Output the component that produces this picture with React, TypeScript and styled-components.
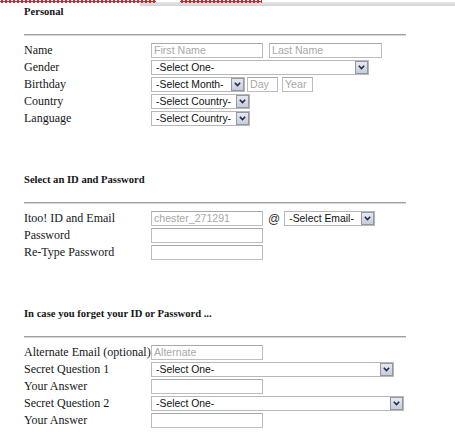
import React from "react";
import styled, { createGlobalStyle } from "styled-components";

const Global = createGlobalStyle`
  html, body { margin: 0; padding: 0; background: #fff; }
  body { font-family: "Liberation Serif", "Times New Roman", serif; color: #111; }
`;

const TopStrip = styled.div`
  position: relative;
  height: 6px;
  overflow: hidden;
`;
const GrayBand = styled.div`
  margin-left: 140px;
  margin-top: 2px;
  height: 4px;
  background: linear-gradient(#e4e4e4, #d4d4d4);
`;
const Squiggle = styled.div<{ $left: number; $width: number }>`
  position: absolute;
  top: 0;
  left: ${(p) => p.$left}px;
  width: ${(p) => p.$width}px;
  height: 3px;
  background: radial-gradient(circle at 50% 50%, #e41e26 0 1.5px, transparent 1.8px) 0 0 / 4px 3px repeat-x;
`;

const Page = styled.div`
  padding-left: 24px;
`;

const Heading = styled.div<{ $top: number }>`
  margin-top: ${(p) => p.$top}px;
  font-family: "Liberation Serif", "Times New Roman", serif;
  font-weight: bold;
  font-size: 10.6px;
  line-height: 12px;
  height: 12px;
  color: #151515;
`;

const Rule = styled.div<{ $top: number }>`
  margin-top: ${(p) => p.$top}px;
  width: 382px;
  height: 2px;
  background: linear-gradient(#a0a0a0 50%, #d8d8d8 50%);
`;

const Form = styled.div<{ $top: number }>`
  margin-top: ${(p) => p.$top}px;
  display: grid;
  grid-template-columns: 127px auto;
  grid-auto-rows: 17px;
  align-items: center;
`;

const Label = styled.div`
  font-size: 12px;
  line-height: 15px;
  white-space: nowrap;
  color: #161616;
`;

const Controls = styled.div`
  display: flex;
  align-items: center;
`;

const Field = styled.div<{ $w: number; $ml?: number }>`
  box-sizing: border-box;
  width: ${(p) => p.$w}px;
  height: 15px;
  margin-left: ${(p) => p.$ml ?? 0}px;
  border: 1px solid #bdbdbd;
  border-top-color: #a9a9a9;
  background: #fff;
  font-family: "Liberation Sans", Arial, sans-serif;
  font-size: 10.6px;
  line-height: 13px;
  padding-left: 2px;
  color: #a8a8a8;
  white-space: nowrap;
  overflow: hidden;
`;

const SelectBox = styled.div<{ $w: number; $ml?: number }>`
  box-sizing: border-box;
  width: ${(p) => p.$w}px;
  height: 15px;
  margin-left: ${(p) => p.$ml ?? 0}px;
  border: 1px solid #b8b8b8;
  background: #fff;
  display: flex;
  align-items: center;
  justify-content: space-between;
  font-family: "Liberation Sans", Arial, sans-serif;
  font-size: 10.4px;
  color: #111;
  padding-left: 4px;
  white-space: nowrap;
`;

const ArrowBtn = styled.div`
  box-sizing: border-box;
  width: 13px;
  height: 13px;
  border: 1px solid #8f98a8;
  background: linear-gradient(#e6e9ef, #c7ccd6);
  display: flex;
  align-items: center;
  justify-content: center;
  flex: none;
`;

const At = styled.span`
  font-family: "Liberation Sans", Arial, sans-serif;
  font-size: 12px;
  color: #333;
  margin: 0 4px 0 5px;
`;

const Select = ({ w, ml, text }: { w: number; ml?: number; text: string }) => (
  <SelectBox $w={w} $ml={ml}>
    <span>{text}</span>
    <ArrowBtn>
      <svg width="7" height="5" viewBox="0 0 7 5">
        <path d="M0.8 0.8 L3.5 3.5 L6.2 0.8" fill="none" stroke="#1d2a52" strokeWidth="1.6" />
      </svg>
    </ArrowBtn>
  </SelectBox>
);

export default function App() {
  return (
    <>
      <Global />
      <TopStrip>
        <GrayBand />
        <Squiggle $left={0} $width={156} />
        <Squiggle $left={180} $width={82} />
      </TopStrip>
      <Page>
        <Heading $top={0}>Personal</Heading>
        <Rule $top={16} />
        <Form $top={6}>
          <Label>Name</Label>
          <Controls>
            <Field $w={112}>First Name</Field>
            <Field $w={113} $ml={6}>Last Name</Field>
          </Controls>
          <Label>Gender</Label>
          <Controls>
            <Select w={218} text="-Select One-" />
          </Controls>
          <Label>Birthday</Label>
          <Controls>
            <Select w={94} text="-Select Month-" />
            <Field $w={31} $ml={2}>Day</Field>
            <Field $w={31} $ml={4}>Year</Field>
          </Controls>
          <Label>Country</Label>
          <Controls>
            <Select w={99} text="-Select Country-" />
          </Controls>
          <Label>Language</Label>
          <Controls>
            <Select w={99} text="-Select Country-" />
          </Controls>
        </Form>

        <Heading $top={47}>Select an ID and Password</Heading>
        <Rule $top={16} />
        <Form $top={6}>
          <Label>Itoo! ID and Email</Label>
          <Controls>
            <Field $w={112}>chester_271291</Field>
            <At>@</At>
            <Select w={91} text="-Select Email-" />
          </Controls>
          <Label>Password</Label>
          <Controls>
            <Field $w={112} />
          </Controls>
          <Label>Re-Type Password</Label>
          <Controls>
            <Field $w={112} />
          </Controls>
        </Form>

        <Heading $top={47}>In case you forget your ID or Password ...</Heading>
        <Rule $top={16} />
        <Form $top={6}>
          <Label>Alternate Email (optional)</Label>
          <Controls>
            <Field $w={112}>Alternate</Field>
          </Controls>
          <Label>Secret Question 1</Label>
          <Controls>
            <Select w={243} text="-Select One-" />
          </Controls>
          <Label>Your Answer</Label>
          <Controls>
            <Field $w={112} />
          </Controls>
          <Label>Secret Question 2</Label>
          <Controls>
            <Select w={253} text="-Select One-" />
          </Controls>
          <Label>Your Answer</Label>
          <Controls>
            <Field $w={112} />
          </Controls>
        </Form>
      </Page>
    </>
  );
}
